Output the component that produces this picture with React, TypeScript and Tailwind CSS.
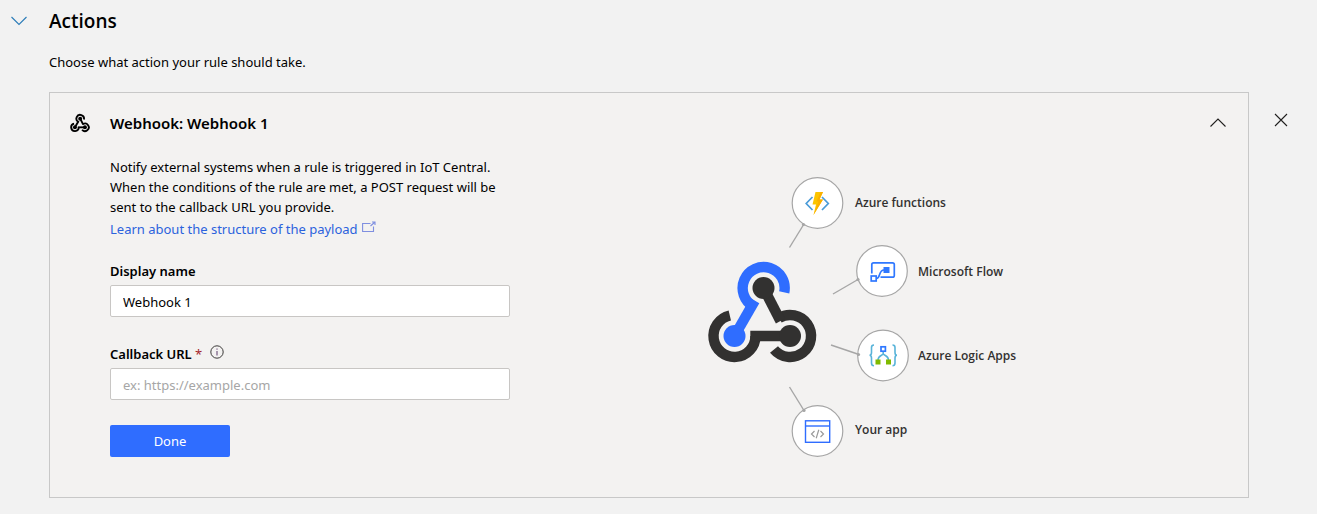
import React, { useState } from "react";

function WebhookMark({ accent, base }: { accent: string; base: string }) {
  return (
    <g fill="none" strokeWidth="10.4">
      <path d="M78.900 146.200 A21 21 0 1 1 74 177.500" stroke={base} />
      <path d="M63.500 116 L80.500 149" stroke={base} />
      <path d="M29.800 143.500 A21 21 0 1 0 55.500 164" stroke={base} />
      <path d="M50.300 164 H90" stroke={base} />
      <path d="M84.200 120.400 A21 21 0 1 0 53.600 134.500" stroke={accent} />
      <path d="M54.800 128.700 L34.500 164" stroke={accent} />
      <circle cx="63.500" cy="116" r="11" fill={base} />
      <circle cx="90" cy="164" r="11" fill={base} />
      <circle cx="34.500" cy="164" r="11" fill={accent} />
    </g>
  );
}

function Diagram() {
  return (
    <svg viewBox="0 0 330 290" className="h-[290px] w-[330px] shrink-0" role="img" aria-label="Webhook targets">
      <WebhookMark accent="#2f6dff" base="#323130" />
      <g stroke="#a6a6a6" strokeWidth="1.4" fill="none">
        <path d="M89.5 75.5 L104 52" />
        <path d="M133 122 L158 107.500" />
        <path d="M131 173 L159 182.500" />
        <path d="M89.500 215 L104 238.500" />
      </g>
      <g fill="#fff" stroke="#a6a6a6" strokeWidth="1.200">
        <circle cx="117.500" cy="31" r="25.300" />
        <circle cx="182" cy="99" r="25.300" />
        <circle cx="183" cy="183.500" r="25.300" />
        <circle cx="117.500" cy="259" r="25.300" />
      </g>
      <g fill="#a6a6a6">
        <circle cx="103.500" cy="52.500" r="1.600" />
        <circle cx="158" cy="107.500" r="1.600" />
        <circle cx="158.500" cy="182.500" r="1.600" />
        <circle cx="104" cy="238.500" r="1.600" />
      </g>

      <g fill="none" stroke="#4a9bd8" strokeWidth="1.700">
        <path d="M112.500 25 L106.200 31.500 L112.500 38" />
        <path d="M122 25 L128.300 31.500 L122 38" />
      </g>
      <path d="M115.500 20 H123 L119.500 27.500 H123 L113.500 43 L116 32.500 H112.500 Z" fill="#fcc400" />
      <path d="M123 20 L119.500 27.500 H123 L113.500 43 L118.500 29.500 H116.500 L120.500 20 Z" fill="#fbb000" />

      <g fill="none" stroke="#2f78ff" strokeWidth="1.700">
        <path d="M171.800 101.500 V92.500 Q171.800 90.800 173.500 90.800 H192.500 Q194.300 90.800 194.300 92.500 V103.500 Q194.300 105.200 192.500 105.200 H180.500" />
        <rect x="171.200" y="104" width="5" height="5" />
        <path d="M176.500 106.500 C180.500 106.500 178.500 98 184 98" />
      </g>
      <rect x="183.500" y="95" width="6" height="6" fill="#2f78ff" />

      <g fill="none" stroke="#59b4d9" strokeWidth="1.600">
        <path d="M174 173 Q171.500 173 171.500 175.500 V180.500 Q171.500 183.200 169.500 183.200 Q171.500 183.200 171.500 186 V191 Q171.500 193.800 174 193.800" />
        <path d="M192.500 173 Q195 173 195 175.500 V180.500 Q195 183.200 197 183.200 Q195 183.200 195 186 V191 Q195 193.800 192.500 193.800" />
        <path d="M183.200 178 V182.500 M178 188 C178 183.500 181.500 184 183.200 182 C185 184 188.500 183.500 188.500 188" />
      </g>
      <rect x="181" y="174.800" width="4.400" height="4.400" fill="#fff" stroke="#2f78ff" strokeWidth="1.700" />
      <rect x="175.500" y="187.500" width="5" height="5" fill="#7fba00" />
      <rect x="186" y="187.500" width="5" height="5" fill="#7fba00" />

      <g fill="none" stroke="#2f6dff" strokeWidth="1.400">
        <rect x="105.500" y="248.800" width="24.200" height="21.500" />
        <path d="M105.500 254 H129.700" />
      </g>
      <g fill="none" stroke="#9a9a9a" strokeWidth="1.200">
        <path d="M114.500 259 L111.500 262 L114.500 265" />
        <path d="M120.500 259 L123.500 262 L120.500 265" />
        <path d="M118.800 257.800 L116.200 266.200" />
      </g>

      <g fill="#323130" className="font-['Open_Sans',sans-serif] text-[12px] font-semibold">
        <text x="155" y="35">Azure functions</text>
        <text x="218" y="104">Microsoft Flow</text>
        <text x="218" y="188">Azure Logic Apps</text>
        <text x="155" y="262">Your app</text>
      </g>
    </svg>
  );
}

const field =
  "h-8 w-full rounded-xs border border-[#c8c6c4] bg-white px-3 pt-0.5 text-[13px] text-black outline-none placeholder:text-[#a6a6a6] focus:border-[#2f6dff]";

export default function App() {
  const [name, setName] = useState("Webhook 1");
  const [url, setUrl] = useState("");

  return (
    <main className="min-h-screen bg-[#f2f2f2] pt-2 pr-5 pb-4 pl-2.5 font-['Noto_Sans','Open_Sans',sans-serif] text-[13px] leading-5 text-black">
      <header className="flex items-center gap-5">
        <button type="button" aria-label="Collapse actions" className="flex h-6 w-[19px] items-center">
          <svg viewBox="0 0 18 10" className="h-[10px] w-[18px]" fill="none" stroke="#2b7cb8" strokeWidth="1.100">
            <path d="M1.500 1 L9 8.500 L16.500 1" />
          </svg>
        </button>
        <h1 className="font-['Open_Sans',sans-serif] text-[19px] leading-[26px] font-semibold">Actions</h1>
      </header>
      <p className="mt-[18px] pl-[39px]">Choose what action your rule should take.</p>

      <div className="mt-5 flex items-start gap-[22px] pl-[39px]">
        <section className="flex-1 border border-[#c8c8c8] bg-[#f3f2f1] px-5 pt-[18px] pb-[35px]">
          <div className="flex items-center">
            <svg viewBox="7 88 111 104" className="h-5 w-5" aria-hidden="true">
              <WebhookMark accent="#000" base="#000" />
            </svg>
            <h2 className="ml-5 flex-1 text-[15px] leading-6 font-semibold">Webhook: Webhook 1</h2>
            <button type="button" aria-label="Collapse webhook" className="flex h-5 w-5 items-center justify-center">
              <svg viewBox="0 0 18 10" className="h-[10px] w-[18px]" fill="none" stroke="#201f1e" strokeWidth="1.100">
                <path d="M1.500 8.500 L9 1 L16.500 8.500" />
              </svg>
            </button>
          </div>

          <div className="flex items-start justify-between pr-[198px] pl-10">
            <form className="mt-[22px] w-[400px]" onSubmit={(e) => e.preventDefault()}>
              <p>
                Notify external systems when a rule is triggered in IoT Central.
                <br />
                When the conditions of the rule are met, a POST request will be
                <br />
                sent to the callback URL you provide.
              </p>
              <a href="#payload" className="flex h-6 items-center gap-1 text-[#2b62dd]">
                Learn about the structure of the payload
                <svg viewBox="0 0 14 12" className="mb-1 h-3 w-[14px]" fill="none" stroke="#7f8fe0" strokeWidth="1.100">
                  <path d="M8.500 2.500 H0.600 V10.500 H11.500 V5.500 M8.500 5 L13 1 M10 1 H13 V4" />
                </svg>
              </a>

              <label htmlFor="display-name" className="mt-5 mb-1 block font-semibold">
                Display name
              </label>
              <input id="display-name" className={field} value={name} onChange={(e) => setName(e.target.value)} />

              <div className="mt-[27px] mb-1 flex items-center">
                <label htmlFor="callback-url" className="font-semibold">
                  Callback URL <span className="font-normal text-[#a4262c]">*</span>
                </label>
                <button type="button" aria-label="About the callback URL" className="mb-1 ml-2">
                  <svg viewBox="0 0 14 14" className="h-[14px] w-[14px]" fill="none" stroke="#3b3a39" strokeWidth="1">
                    <circle cx="7" cy="7" r="6.200" />
                    <path d="M7 6 V10.500 M7 3.500 V4.700" stroke="#5b3a6b" />
                  </svg>
                </button>
              </div>
              <input
                id="callback-url"
                className={field}
                placeholder="ex: https://example.com"
                value={url}
                onChange={(e) => setUrl(e.target.value)}
              />

              <button type="submit" className="mt-[25px] block h-8 w-[120px] rounded-xs bg-[#2f6dff] text-white">
                Done
              </button>
            </form>
            <div className="mt-[37px]">
              <Diagram />
            </div>
          </div>
        </section>
        <button type="button" aria-label="Remove action" className="mt-[18px] mr-1.5 flex h-5 w-5 items-center justify-center">
          <svg viewBox="0 0 14 14" className="h-[14px] w-[14px]" fill="none" stroke="#201f1e" strokeWidth="1.100">
            <path d="M1 1 L13 13 M13 1 L1 13" />
          </svg>
        </button>
      </div>
    </main>
  );
}
